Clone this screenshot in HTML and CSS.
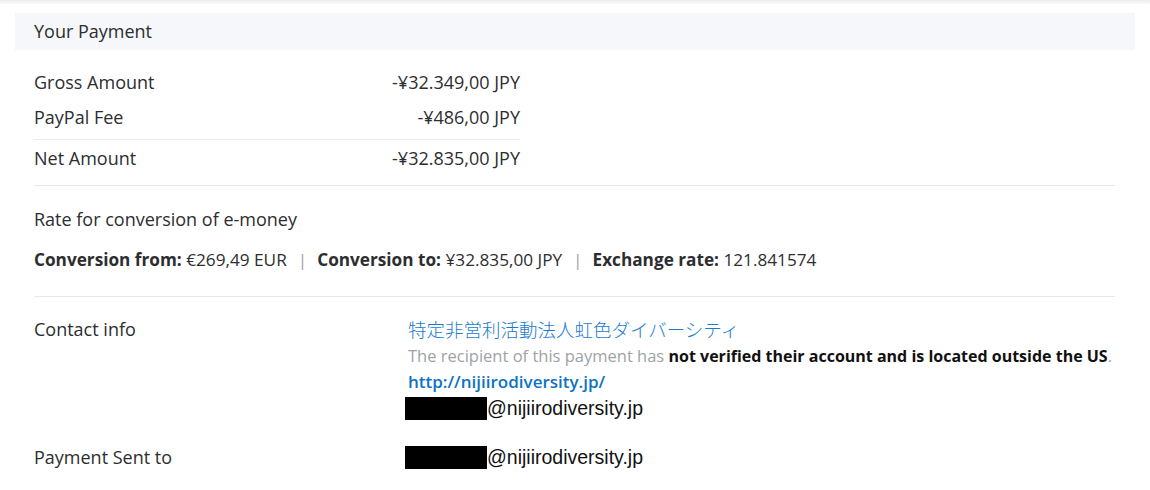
FILE: index.html
```html
<!DOCTYPE html>
<html lang="en">
<head>
<meta charset="utf-8">
<title>Your Payment</title>
<link rel="stylesheet" href="styles.css">
</head>
<body>
<div class="topshade"></div>
<div class="page">
  <div class="section-head">Your Payment</div>
  <div class="body">
    <div class="amounts">
      <div class="amt-row"><span>Gross Amount</span><span>-¥32.349,00 JPY</span></div>
      <div class="amt-row"><span>PayPal Fee</span><span>-¥486,00 JPY</span></div>
      <div class="amt-row net"><span>Net Amount</span><span>-¥32.835,00 JPY</span></div>
    </div>
    <div class="divider"></div>
    <div class="rate">
      <div class="rate-title">Rate for conversion of e-money</div>
      <div class="rate-line"><b>Conversion from:</b> €269,49 EUR<span class="sep">|</span><b>Conversion to:</b> ¥32.835,00 JPY<span class="sep">|</span><b>Exchange rate:</b> 121.841574</div>
    </div>
    <div class="divider"></div>
    <div class="info-row contact">
      <div class="info-label">Contact info</div>
      <div class="info-value">
        <div class="jp-name">特定非営利活動法人虹色ダイバーシティ</div>
        <div class="notice">The recipient of this payment has <strong>not verified their account and is located outside the US</strong>.</div>
        <div class="site">http://nijiirodiversity.jp/</div>
        <div class="email"><span class="redact"></span>@nijiirodiversity.jp</div>
      </div>
    </div>
    <div class="info-row sent">
      <div class="info-label">Payment Sent to</div>
      <div class="info-value">
        <div class="email"><span class="redact"></span>@nijiirodiversity.jp</div>
      </div>
    </div>
  </div>
</div>
</body>
</html>
```
FILE: styles.css
```css
html, body {
  margin: 0;
  padding: 0;
  background: #ffffff;
}
body {
  font-family: "Open Sans", "Noto Sans", sans-serif;
  font-size: 18px;
  font-weight: 500;
  color: #2c2e2f;
  width: 1150px;
  height: 490px;
  overflow: hidden;
}
.topshade {
  height: 4px;
  background: linear-gradient(#ececec, #fafafa);
}
.page {
  padding: 9px 15px 0 15px;
}
.section-head {
  background: #f5f7fa;
  height: 37px;
  line-height: 37px;
  padding-left: 19px;
}
.body {
  padding: 0 20px 0 19px;
}
.amounts {
  width: 486px;
  padding-top: 14px;
}
.amt-row {
  display: flex;
  justify-content: space-between;
  height: 35px;
  align-items: center;
}
.amt-row.net {
  margin-top: 5px;
  border-top: 1px solid #eaedef;
  height: 36px;
}
.divider {
  height: 1px;
  background: #e6e8ea;
}
.amounts + .divider {
  margin-top: 9px;
}
.rate {
  padding: 20px 0 23px;
}
.rate-title {
  line-height: 26px;
}
.rate-line {
  margin-top: 15px;
  line-height: 26px;
  font-size: 17.2px;
  white-space: nowrap;
}
.rate-line b {
  font-weight: 700;
}
.sep {
  color: #9da3a6;
  margin: 0 10px 0 11px;
}
.info-row {
  display: flex;
}
.info-label {
  width: 374px;
  flex: none;
}
.info-value {
  min-width: 0;
}
.contact {
  padding-top: 19px;
}
.contact .info-label {
  line-height: 26px;
}
.jp-name {
  font-family: "Noto Sans CJK JP", sans-serif;
  font-weight: 300;
  font-size: 18.5px;
  color: #1a7bd0;
  line-height: 26px;
}
.notice {
  color: #9da3a6;
  font-size: 16.5px;
  font-weight: 400;
  line-height: 26px;
  margin-top: 1px;
  white-space: nowrap;
}
.notice strong {
  color: #111111;
  font-weight: 700;
  font-size: 16px;
}
.site {
  color: #0c73c5;
  font-weight: 600;
  font-size: 17px;
  line-height: 25px;
}
.email {
  font-family: "Liberation Sans", Arial, sans-serif;
  font-size: 19.5px;
  font-weight: 400;
  color: #111111;
  display: flex;
  align-items: center;
  height: 28px;
  margin-left: -3px;
}
.redact {
  display: inline-block;
  width: 82px;
  height: 23px;
  background: #000000;
}
.sent {
  padding-top: 21px;
}
.sent .info-label {
  line-height: 28px;
}
```
